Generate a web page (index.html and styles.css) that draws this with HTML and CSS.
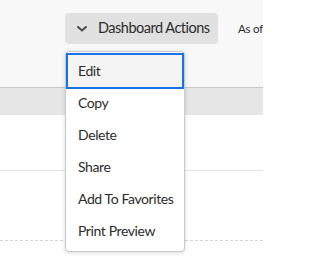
FILE: index.html
```html
<!DOCTYPE html>
<html>
<head>
<meta charset="utf-8">
<link rel="stylesheet" href="styles.css">
</head>
<body>
<div class="page">
  <header class="toolbar">
    <button class="actions-btn">
      <svg class="chev" width="10" height="6" viewBox="0 0 10 6"><path d="M1 1 L5 4.6 L9 1" fill="none" stroke="#4b4b4b" stroke-width="2" stroke-linecap="round" stroke-linejoin="round"/></svg>
      <span class="btn-label">Dashboard Actions</span>
    </button>
    <span class="asof">As of</span>
  </header>
  <div class="band"></div>
  <div class="row row-solid"></div>
  <div class="row row-dashed"></div>
  <ul class="menu">
    <li class="item focused">Edit</li>
    <li class="item">Copy</li>
    <li class="item">Delete</li>
    <li class="item">Share</li>
    <li class="item">Add To Favorites</li>
    <li class="item">Print Preview</li>
  </ul>
</div>
</body>
</html>
```
FILE: styles.css
```css
html, body {
  margin: 0;
  padding: 0;
  background: #ffffff;
  font-family: "Lato", "Noto Sans", sans-serif;
  color: #2c2c2c;
}
.page {
  position: relative;
  width: 263px;
  height: 263px;
  overflow: hidden;
}
.toolbar {
  height: 87px;
  box-sizing: border-box;
  background: #f8f8f8;
  display: flex;
  align-items: flex-start;
  padding: 13px 0 0 65px;
  white-space: nowrap;
}
.actions-btn {
  flex: none;
  height: 31px;
  width: 153px;
  box-sizing: border-box;
  border: none;
  border-radius: 4px;
  background: #e1e1e1;
  display: flex;
  align-items: center;
  padding: 0 0 0 12px;
  font-family: inherit;
  font-size: 14.5px;
  letter-spacing: -0.5px;
  color: #2c2c2c;
  gap: 11px;
}
.chev {
  flex: none;
  display: block;
  margin-top: 1px;
}
.btn-label {
  line-height: 1;
}
.asof {
  flex: none;
  margin-left: 20px;
  font-size: 11.5px;
  letter-spacing: -0.2px;
  line-height: 31px;
  color: #2c2c2c;
}
.band {
  height: 28px;
  box-sizing: border-box;
  border-top: 1px solid #c8c8c8;
  background: #e6e6e6;
}
.row-solid {
  height: 56px;
  box-sizing: border-box;
  border-bottom: 1px solid #e1e1e1;
}
.row-dashed {
  height: 70px;
  box-sizing: border-box;
  border-bottom: 1px dashed #d3d3d3;
}
.menu {
  position: absolute;
  top: 51px;
  left: 65px;
  width: 120px;
  box-sizing: border-box;
  margin: 0;
  padding: 3px 2px 4px;
  list-style: none;
  background: #ffffff;
  border: 1px solid #cacaca;
  border-radius: 4px;
  box-shadow: 0 1px 4px rgba(0,0,0,0.15);
}
.item {
  height: 32px;
  line-height: 32px;
  padding-left: 10px;
  font-size: 14px;
  letter-spacing: -0.4px;
  color: #2c2c2c;
  white-space: nowrap;
}
.item.focused {
  background: #f4f4f4;
  outline: 2px solid #1473e6;
}
```
